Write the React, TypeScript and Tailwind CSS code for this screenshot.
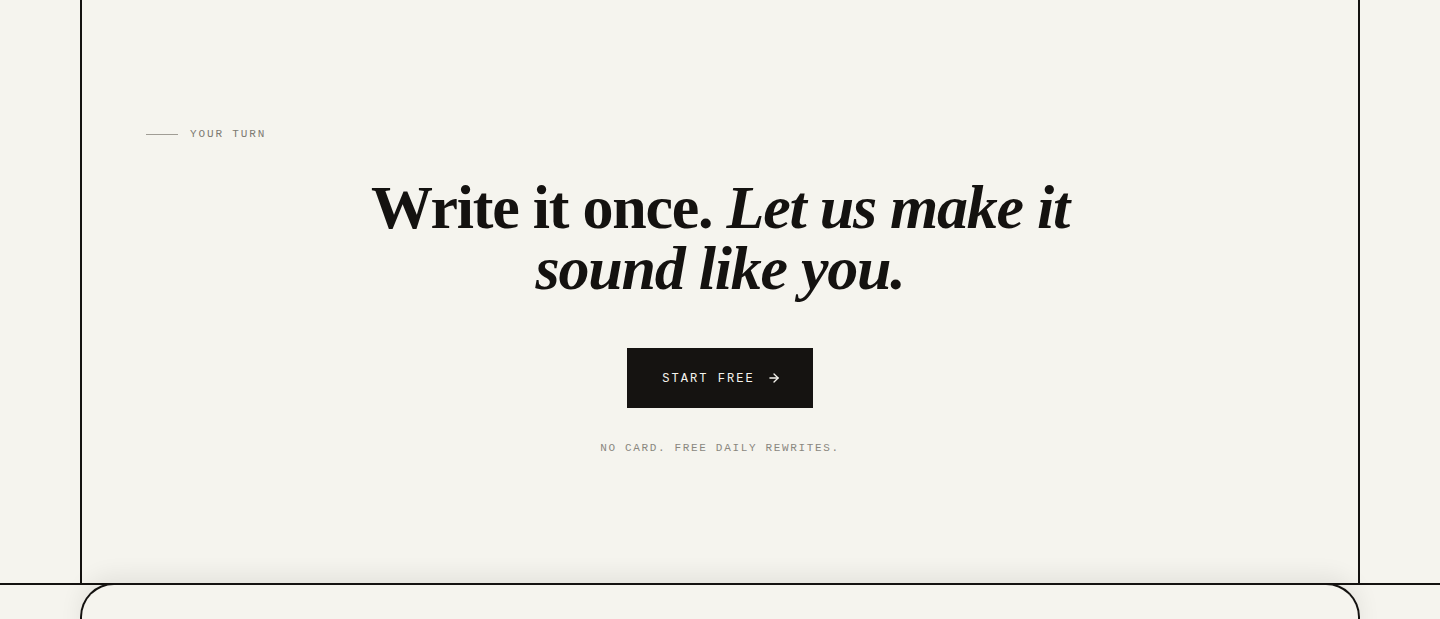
import { ArrowRight } from "lucide-react";

const mono = "font-['Liberation_Mono','DejaVu_Sans_Mono',monospace]";

const App = () => {
    return (
        <div className="min-h-[619px] bg-[#f5f4ee] text-[#141210] overflow-hidden">
            <section className="mx-auto w-[1280px] h-[583px] border-x-2 border-[#141210]">
                <div className="px-[64px] pt-[127px]">
                    <div className="flex items-center gap-3">
                        <span className="block w-8 h-px bg-[#a09d95]" />
                        <span
                            className={`${mono} text-[11px] leading-[14px] tracking-[0.17em] text-[#7d7a72] uppercase`}
                        >
                            Your turn
                        </span>
                    </div>
                    <h2 className="mt-[36px] text-center font-['Liberation_Serif','DejaVu_Serif',serif] font-bold text-[62px] leading-[61px] tracking-[-0.02em]">
                        Write it once. <em className="italic">Let us make it</em>
                        <br />
                        <em className="italic">sound like you.</em>
                    </h2>
                    <div className="mt-[49px] flex flex-col items-center">
                        <button
                            className={`${mono} flex items-center gap-[12px] h-[60px] pl-[35px] pr-[32px] bg-[#151311] text-[#f5f4ee] text-[12px] leading-none tracking-[0.17em] uppercase`}
                        >
                            <span className="pt-[2px]">Start free</span>
                            <ArrowRight size={14} strokeWidth={2.25} />
                        </button>
                        <p
                            className={`${mono} mt-[33px] text-[11px] leading-[14px] tracking-[0.15em] text-[#8a877f] uppercase`}
                        >
                            No card. Free daily rewrites.
                        </p>
                    </div>
                </div>
            </section>
            <div className="border-t-2 border-[#141210]">
                <div className="relative mx-auto -mt-[2px] w-[1280px] h-[60px] rounded-t-[34px] border-2 border-b-0 border-[#141210] bg-[#f5f4ee] shadow-[0_-8px_22px_rgba(20,18,16,0.07)]" />
            </div>
        </div>
    );
};

export default App;
